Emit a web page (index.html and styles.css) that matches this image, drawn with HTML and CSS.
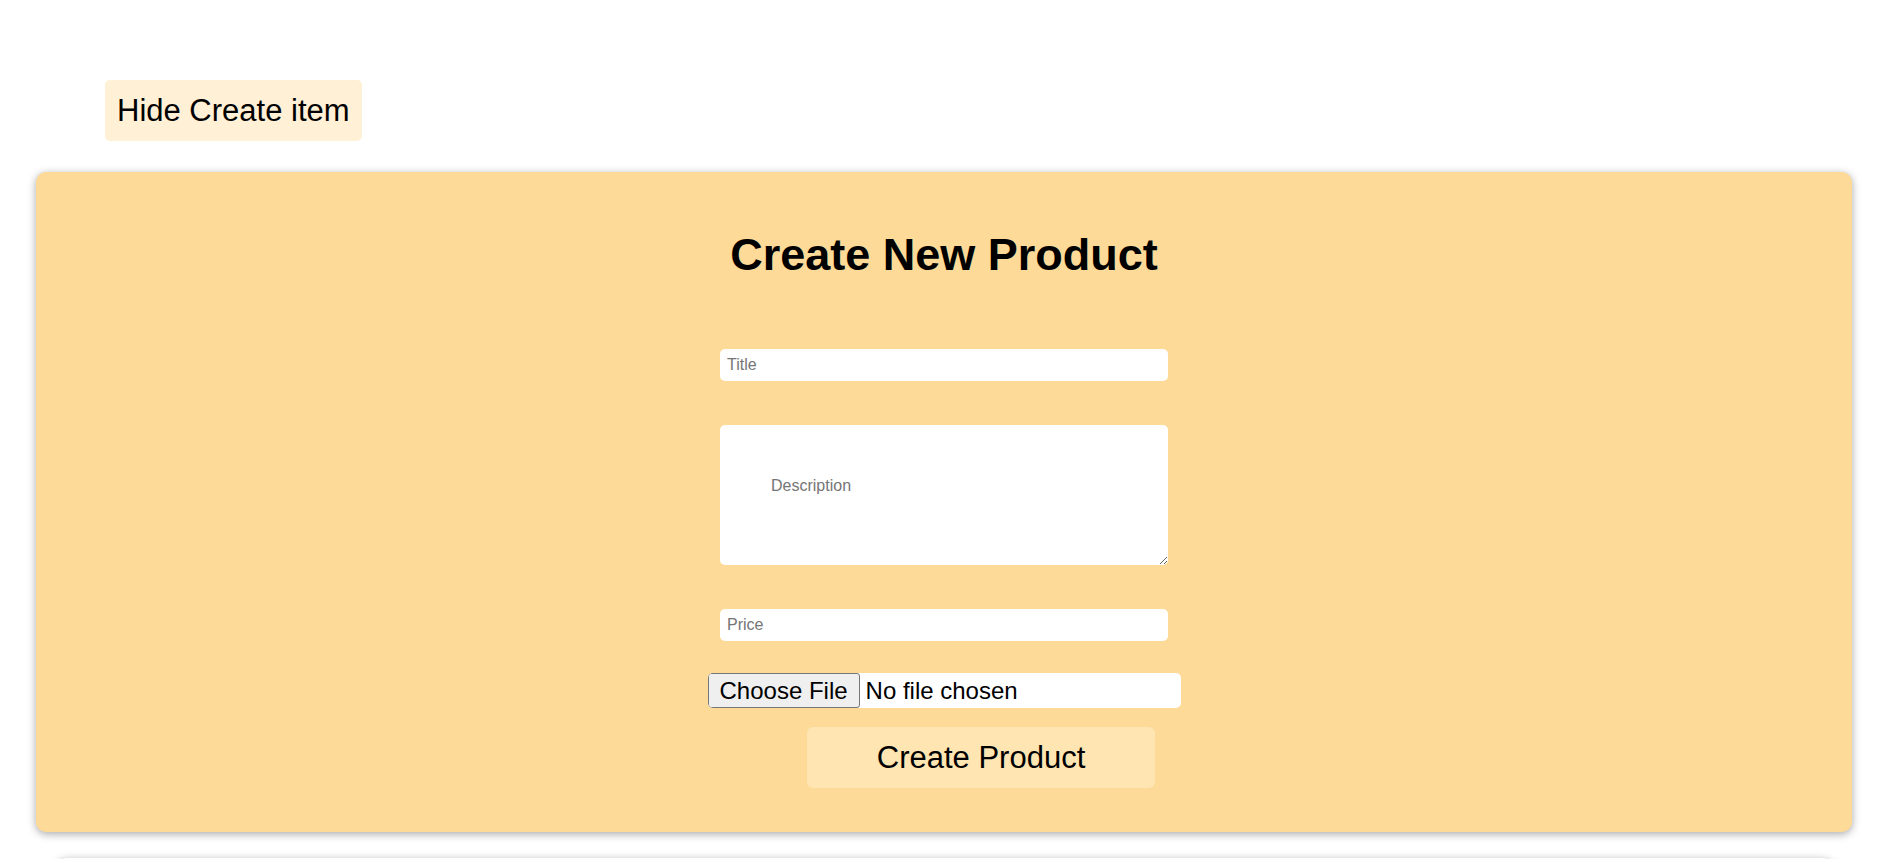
FILE: index.html
```html
<!DOCTYPE html>
<html lang="en">
<head>
<meta charset="utf-8">
<title>Create Product</title>
<link rel="stylesheet" href="styles.css">
</head>
<body>
  <div class="toolbar">
    <button class="toggle-btn" type="button">Hide Create item</button>
  </div>
  <section class="create-card">
    <h1 class="create-title">Create New Product</h1>
    <form class="create-form">
      <input class="field" type="text" placeholder="Title">
      <textarea class="field field-area" placeholder="Description"></textarea>
      <input class="field" type="text" placeholder="Price">
      <input class="file-field" type="file">
      <button class="submit-btn" type="button">Create Product</button>
    </form>
  </section>
  <section class="list-card"></section>
</body>
</html>
```

FILE: styles.css
```css
html, body {
  margin: 0;
  padding: 0;
  background: #ffffff;
  font-family: "Liberation Sans", Arial, sans-serif;
  color: #000;
}

.toolbar {
  padding: 80px 0 0 105px;
}

.toggle-btn {
  font-family: "Liberation Sans", Arial, sans-serif;
  font-size: 31px;
  line-height: 36px;
  padding: 13px 12px 12px;
  border: none;
  border-radius: 5px;
  background: #fff0d6;
  color: #000;
  cursor: pointer;
}

.create-card {
  width: 1816px;
  margin: 31px auto 0 36px;
  background: #fdda97;
  border-radius: 10px;
  box-shadow: 0 2px 8px rgba(0, 0, 0, 0.35);
  padding: 57px 0 44px;
  box-sizing: border-box;
}

.create-title {
  margin: 0;
  text-align: center;
  font-size: 45px;
  line-height: 52px;
  font-weight: bold;
}

.create-form {
  display: flex;
  flex-direction: column;
  align-items: center;
  margin-top: 68px;
}

.field {
  width: 448px;
  height: 32px;
  box-sizing: border-box;
  border: none;
  border-radius: 5px;
  background: #fff;
  padding: 0 7px;
  font-family: "Liberation Sans", Arial, sans-serif;
  font-size: 16px;
  color: #000;
  margin: 0 0 44px;
  outline: none;
}

.field::placeholder {
  color: #757575;
}

.field-area {
  height: 140px;
  padding: 52px 51px 40px;
  line-height: 18px;
  resize: vertical;
  display: block;
}

.file-field {
  width: 473px;
  height: 35px;
  box-sizing: border-box;
  margin: -12px 0 19px;
  padding: 0;
  border: none;
  border-radius: 5px;
  background: #fff;
  font-family: "Liberation Sans", Arial, sans-serif;
  font-size: 24px;
  color: #000;
}

.file-field::file-selector-button {
  font-family: "Liberation Sans", Arial, sans-serif;
  font-size: 24px;
  height: 35px;
  margin: 0 6px 0 0;
  padding: 0 11px;
  background: #efefef;
  border: 1px solid #767676;
  border-radius: 3px;
  color: #000;
}

.submit-btn {
  width: 348px;
  height: 61px;
  margin-left: 74px;
  border: none;
  border-radius: 6px;
  background: #fee5b1;
  font-family: "Liberation Sans", Arial, sans-serif;
  font-size: 31px;
  color: #000;
  cursor: pointer;
}

.list-card {
  width: 94%;
  height: 300px;
  margin: 26px auto 0;
  background: #fff;
  border-radius: 10px;
  box-shadow: 0 2px 8px rgba(0, 0, 0, 0.35);
}
```
